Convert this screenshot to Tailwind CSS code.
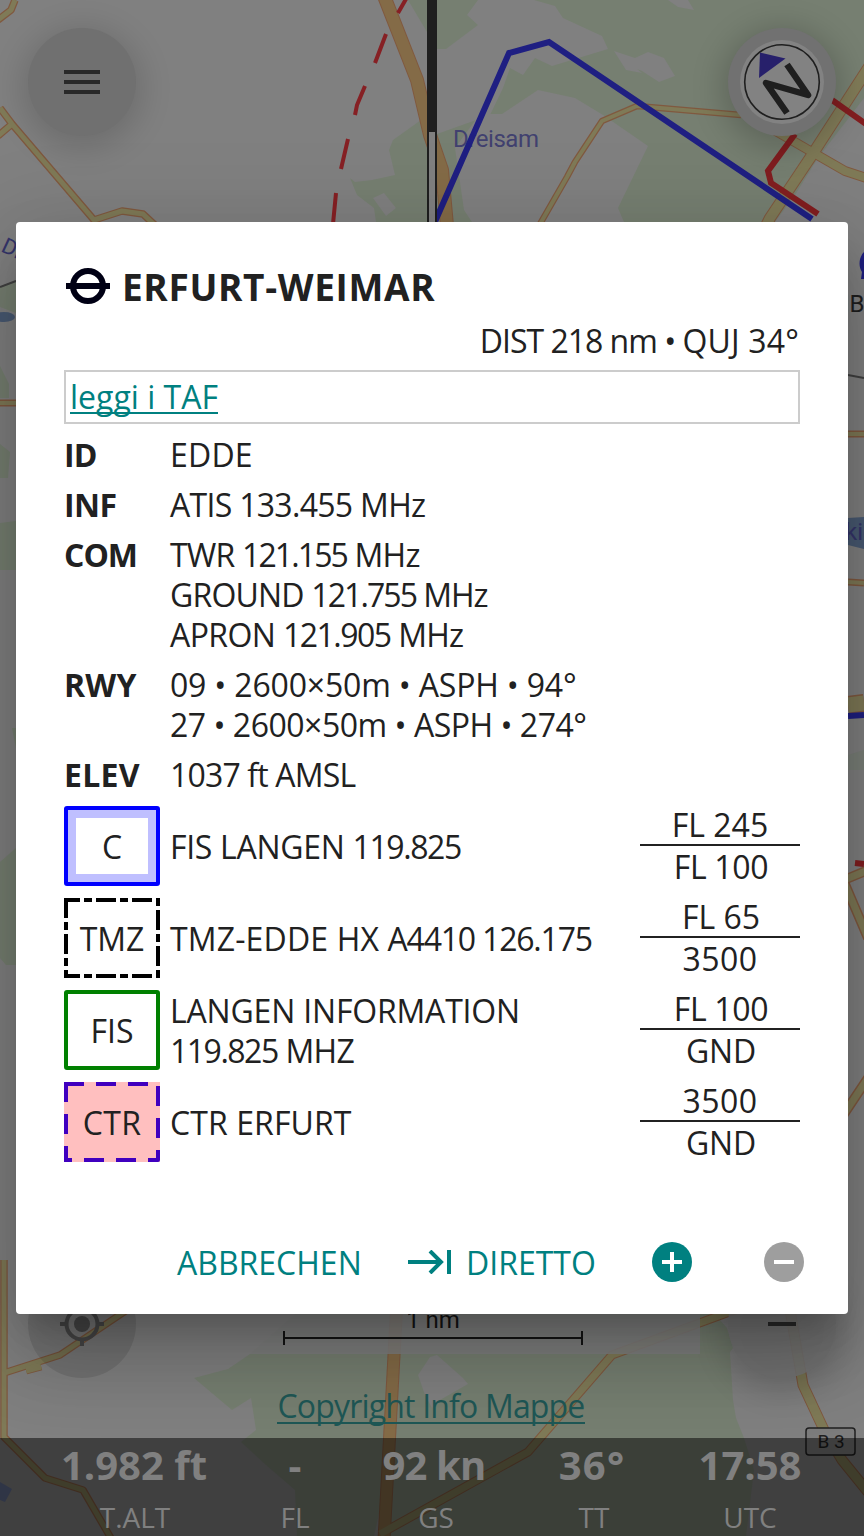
<!DOCTYPE html>
<html lang="it">
<head>
<meta charset="utf-8">
<title>Erfurt-Weimar</title>
<script src="https://cdn.jsdelivr.net/npm/@tailwindcss/browser@4"></script>
</head>
<body class="relative h-[1536px] w-[864px] overflow-hidden bg-[#808080] font-['Open_Sans',sans-serif]">

<!-- Map -->
<svg class="absolute inset-0" width="864" height="1536" viewBox="0 0 864 1536" fill="none">
  <defs>
    <filter id="soft" x="-60%" y="-60%" width="220%" height="220%"><feGaussianBlur stdDeviation="16"/></filter>
  </defs>
  <g fill="#767f71">
    <path d="M408 0H864V222H376L374 208L357 195L350 178L355 182L372 180L395 175L389 150L393 140L421 120L427 118V32Z"/>
    <path d="M0 307L16 313V280L0 287ZM0 366L9 384V398H0ZM0 444L10 452L8 478H0ZM0 523L16 521V570H0ZM0 862L16 848V965L6 965L0 958ZM12 728H16V748Z"/>
    <path d="M848 755L864 750V770H848Z" opacity=".5"/>
    <path d="M194 1378L228 1369L250 1354L300 1310H719L720 1320L727 1328L733 1348L730 1352L733 1400L736 1418L744 1438L754 1470L746 1536H297L295 1490L266 1465L241 1442L256 1430L251 1398L232 1410Z"/>
  </g>
  <g fill="#808080">
    <path d="M373 198L384 193L396 208L386 216Z"/>
    <path d="M437 49L446 49L478 25L467 15L478 0H534L555 6L563 18L602 36L608 49L552 66L535 58L523 75L510 68L503 88L490 115L437 134Z"/>
    <path d="M455 148L480 114H502L538 90L575 98L603 115L648 146L618 208L624 222H472L464 210Z"/>
    <path d="M614 51L635 58L648 52L664 58L675 76L659 82L642 71L637 69L642 73L626 70ZM668 0H688L694 10L678 7Z"/>
    <path d="M864 98L818 158L795 195L775 222H864Z"/>
    <path d="M418 1375L430 1357L437 1355L463 1378L468 1384L440 1400L432 1408L425 1395Z"/>
    <path d="M374 1536L379 1513L384 1536Z"/>
  </g>
  <g fill="#495a73"><ellipse cx="4" cy="317" rx="11" ry="5"/><path d="M848 518L864 517V549L848 545Z"/></g>
  <path d="M0 1482L12 1489L5 1502L0 1500Z" fill="#5f6a8c"/>
  <!-- road casings, then fills -->
  <g stroke="#80593f" stroke-linejoin="round">
    <path stroke-width="14" d="M384 -4L417 80L430 135L442 170L447 226"/>
    <path stroke-width="13" d="M397 1300L384 1540"/>
    <path stroke-width="7.500" d="M15 0L11 10L-2 20M0 108L12 124L94 220L122 211L143 214L158 228M12 124L-2 136"/>
    <path stroke-width="6.500" d="M741 115L637 106L602 121L575 162L567 177L540 224"/>
    <path stroke-width="10" d="M774 130L812 152L845 171L866 178"/>
    <path stroke-width="12" d="M876 56L812 155L770 218L764 230"/>
    <path stroke-width="7.500" d="M4 1260V1437L45 1478L83 1490L112 1540M4 1373L60 1355L130 1308"/>
    <path stroke-width="9" d="M26 1370L41 1366"/>
    <path stroke-width="9" d="M735 1310L612 1355L528 1452L380 1534"/>
    <path stroke-width="11" d="M790 1310L803 1385L824 1430L842 1460L868 1492"/>
    <path stroke-width="7" d="M0 403H16M848 434H864M848 582L864 583"/>
    <path stroke-width="18" d="M848 705L864 703"/>
    <path stroke-width="10" d="M844 880L868 870M844 882L868 938M844 1114L868 1078"/>
  </g>
  <g stroke-linejoin="round" stroke="#7f7a57">
    <path stroke="#846b47" stroke-width="12" d="M384 -4L417 80L430 135L442 170L447 226"/>
    <path stroke="#846b47" stroke-width="11" d="M397 1300L384 1540"/>
    <path stroke-width="5" d="M15 0L11 10L-2 20M0 108L12 124L94 220L122 211L143 214L158 228M12 124L-2 136"/>
    <path stroke-width="4" d="M741 115L637 106L602 121L575 162L567 177L540 224"/>
    <path stroke-width="8" d="M774 130L812 152L845 171L866 178"/>
    <path stroke-width="10" d="M876 56L812 155L770 218L764 230"/>
    <path stroke-width="5" d="M4 1260V1437L45 1478L83 1490L112 1540M4 1373L60 1355L130 1308"/>
    <path stroke-width="7" d="M26 1370L41 1366"/>
    <path stroke-width="7" d="M735 1310L612 1355L528 1452L380 1534"/>
    <path stroke-width="9" d="M790 1310L803 1385L824 1430L842 1460L868 1492"/>
    <path stroke-width="4" d="M0 403H16M848 434H864M848 582L864 583"/>
    <path stroke-width="15" d="M848 705L864 703"/>
    <path stroke-width="7" d="M844 880L868 870M844 882L868 938M844 1114L868 1078"/>
  </g>
  <path d="M0 287L16 281M848 375L864 378" stroke="#404040" stroke-width="2"/>
  <g font-family="Roboto,sans-serif" font-size="24">
    <text x="453" y="147" fill="#41416f" textLength="86">Dreisam</text>
    <text x="0" y="251" fill="#35356b" font-size="22" transform="rotate(25 0 251)">Dr</text>
    <text x="843" y="312" fill="#1f1f1f">IB</text>
    <text x="845" y="540" fill="#35356b">kig</text>
  </g>
  <path d="M864 252C859 257 858 266 862 272L861 279H866V252Z" fill="#1f1f80"/>
  <path d="M406 -1L398 13M386 34L375 63M365 86L357 105L355 115M348 139L341 169M336 193L333 224" stroke="#862024" stroke-width="4"/>
  <path d="M832 100L866 124M795 134L768 171L771 183L818 214M855 863L864 864" stroke="#821e20" stroke-width="6"/>
  <path d="M434 224L509 53L549 42L812 219M848 716L864 715" stroke="#1f1f82" stroke-width="6"/>
  <!-- track-up line -->
  <path d="M427 0H437V228H427Z" fill="#1f1f1f"/>
  <path d="M429 132H435V228H429Z" fill="#808080"/>
  <!-- round map buttons -->
  <g>
    <circle cx="82" cy="88" r="60" fill="#000" opacity=".15" filter="url(#soft)"/>
    <circle cx="82" cy="82" r="54" fill="#707070"/>
    <path d="M64 72H100M64 82H100M64 92H100" stroke="#292929" stroke-width="4"/>
  </g>
  <g>
    <circle cx="782" cy="88" r="60" fill="#000" opacity=".2" filter="url(#soft)"/>
    <circle cx="782" cy="82" r="54" fill="#717171"/>
    <circle cx="782" cy="82" r="42" fill="#828282"/>
    <circle cx="782" cy="82" r="37.3" stroke="#1f1f1f" stroke-width="1.6"/>
    <path d="M760 52.500L785.500 58.500L759 78Z" fill="#27206b"/>
    <path d="M787 64.500L808 95L766 83L787 113" stroke="#1f1f1f" stroke-width="6.500" stroke-linejoin="round"/>
  </g>
  <g>
    <circle cx="82" cy="1324" r="54" fill="#000" opacity=".1"/>
    <g stroke="#464646" stroke-width="4"><circle cx="82" cy="1324" r="15.500"/><path d="M60 1324H68M96 1324H104M82 1338V1346"/></g>
    <circle cx="82" cy="1324" r="8" fill="#464646"/>
  </g>
  <g>
    <circle cx="782" cy="1330" r="60" fill="#000" opacity=".15" filter="url(#soft)"/>
    <circle cx="782" cy="1324" r="54" fill="#727272" opacity=".88"/>
    <path d="M768 1324H796" stroke="#292929" stroke-width="4"/>
  </g>
  <!-- scale -->
  <path d="M164 1300H700V1354H164Z" fill="#808080" opacity=".88"/>
  <path d="M284 1331V1345M582 1331V1345M284 1338H582" stroke="#141414" stroke-width="2"/>
  <text x="433" y="1328" text-anchor="middle" fill="#141414" font-family="Roboto,sans-serif" font-size="24">1 nm</text>
  <g>
    <rect x="806" y="1428" width="49" height="27" rx="3" fill="#7c7c7c" stroke="#1f1f1f" stroke-width="1.500"/>
    <text x="831" y="1448" text-anchor="middle" fill="#1f1f1f" font-family="Roboto,sans-serif" font-size="19">B 3</text>
  </g>
</svg>

<div class="relative flex h-full flex-col justify-end">
  <a class="mb-[12px] pr-[2px] text-center text-[32px] leading-[40px] tracking-[-0.82px] text-[#1f5856]"><span class="border-b-2 border-[#1f5856] inline-block h-[38px] leading-[40px]">Copyright Info Mappe</span></a>
  <footer class="grid h-[98px] grid-cols-[268px_54px_228px_84px_230px] bg-black/50 text-center text-[#808080]">
    <div><div class="h-[58px] text-[40px] font-bold leading-[54px]">1.982 ft</div><div class="pl-[2px] text-[28px] leading-[43px]">T.ALT</div></div>
    <div><div class="h-[58px] text-[40px] font-bold leading-[54px]">-</div><div class="text-[28px] leading-[43px]">FL</div></div>
    <div><div class="h-[58px] whitespace-nowrap pr-[4px] text-[40px] font-bold leading-[54px] tracking-[-0.8px]">92 kn</div><div class="text-[28px] leading-[43px]">GS</div></div>
    <div><div class="h-[58px] text-[40px] font-bold leading-[54px] tracking-[1.2px]">36°</div><div class="pl-1 text-[28px] leading-[43px]">TT</div></div>
    <div><div class="h-[58px] pl-[2px] text-[40px] font-bold leading-[54px]">17:58</div><div class="pl-[2px] text-[28px] leading-[43px]">UTC</div></div>
  </footer>
</div>

<!-- Dialog -->
<main class="absolute left-4 top-[222px] flex h-[1092px] w-[832px] flex-col rounded bg-white px-12 pt-[41px] text-[32px] leading-[40px] text-[#212121] shadow-[0_22px_30px_-14px_rgba(0,0,0,0.2),0_48px_76px_6px_rgba(0,0,0,0.14),0_18px_92px_16px_rgba(0,0,0,0.12)]">
  <h1 class="flex h-[48px] items-center pl-[2px] text-[37px] font-bold leading-[48px] tracking-[0.65px]">
    <svg class="mr-3 -mt-[2px]" width="44" height="40" viewBox="0 0 44 40" fill="none" stroke="#000014" stroke-width="6"><circle cx="22" cy="20" r="15"/><path d="M0 20H44"/></svg>ERFURT-WEIMAR
  </h1>
  <p class="mt-[10px] whitespace-pre pr-px text-right tracking-[-1px]">DIST 218 nm • <span class="tracking-[0.15px]">QUJ 34°</span></p>
  <div class="mt-[9px] h-[54px] border-2 border-[#ccc] px-1 pt-[5px] text-[#008080]"><span class="inline-block h-[37px] border-b-2 border-[#008080] leading-[40px]">leggi i TAF</span></div>

  <dl class="mt-[11px] grid grid-cols-[106px_1fr] gap-y-[10px] whitespace-nowrap">
    <dt class="font-bold tracking-[-0.8px]">ID</dt><dd class="tracking-[0.2px]">EDDE</dd>
    <dt class="font-bold tracking-[-0.5px]">INF</dt><dd class="tracking-[-0.7px]">ATIS 133.455 MHz</dd>
    <dt class="font-bold tracking-[-1px]">COM</dt>
    <dd><div><span class="tracking-[-0.8px]">TWR </span><span class="tracking-[-1.9px]">121.155</span><span class="tracking-[-0.75px]"> MHz</span></div><div><span class="tracking-[-0.8px]">GROUND </span><span class="tracking-[-1.9px]">121.755</span><span class="tracking-[-1.1px]"> MHz</span></div><div><span class="tracking-[-0.6px]">APRON </span><span class="tracking-[-1.5px]">121.905</span><span class="tracking-[-0.75px]"> MHz</span></div></dd>
    <dt class="font-bold tracking-[0.2px]">RWY</dt>
    <dd><div class="tracking-[-0.18px]">09 • 2600×50m • ASPH • 94°</div><div class="tracking-[-0.48px]">27 • 2600×50m • ASPH • 274°</div></dd>
    <dt class="font-bold tracking-[0.3px]">ELEV</dt><dd class="tracking-[-0.83px]">1037 ft AMSL</dd>
  </dl>

  <section class="mt-[11px] flex flex-col gap-3 whitespace-nowrap">
    <div class="flex h-20 items-center">
      <div class="flex h-20 w-24 items-center justify-center rounded-[3px] border-4 border-[#0000ff] bg-white pt-[2px] shadow-[inset_0_0_0_8px_#bfbfff]">C</div>
      <div class="flex-1 pl-[10px] pt-[2px]"><span class="tracking-[-0.3px]">FIS LANGEN </span><span class="tracking-[-1.4px]">119.825</span></div>
      <div class="w-40 text-center"><div class="h-[39px] border-b-2 border-[#212121] leading-[36px]">FL 245</div><div class="h-[39px] leading-[41px] pl-[2px] tracking-[-0.3px]">FL 100</div></div>
    </div>
    <div class="flex h-20 items-center">
      <div class="relative flex h-20 w-24 items-center justify-center pt-[2px]">
        <svg class="absolute inset-0" width="96" height="80" fill="none" stroke="#000" stroke-width="4" stroke-linejoin="round"><path stroke-dasharray="20 4 8 4" stroke-dashoffset="4" d="M0 2H94"/><path stroke-dasharray="8 4 20 4" d="M94 0V80"/><path stroke-dasharray="20 4 8 4" d="M2 0V80"/><path stroke-dasharray="20 4 8 4" stroke-dashoffset="4" d="M0 78H96"/></svg>
        TMZ
      </div>
      <div class="flex-1 pl-[10px] pt-[2px]"><span class="tracking-[0.15px]">TMZ-EDDE HX </span><span class="tracking-[-1.2px]">A4410 126.175</span></div>
      <div class="w-40 text-center"><div class="h-[39px] border-b-2 border-[#212121] leading-[36px] pl-[2px]">FL 65</div><div class="h-[39px] leading-[41px] tracking-[0.4px]">3500</div></div>
    </div>
    <div class="flex h-20 items-center">
      <div class="flex h-20 w-24 items-center justify-center rounded-[3px] border-4 border-[#008000] pt-[2px]">FIS</div>
      <div class="flex-1 pl-[10px] pt-[2px]"><div class="tracking-[-0.18px]">LANGEN INFORMATION</div><div><span class="tracking-[-1.5px]">119.825</span><span class="tracking-[-0.6px]"> MHZ</span></div></div>
      <div class="w-40 text-center"><div class="h-[39px] border-b-2 border-[#212121] leading-[36px] pl-[2px] tracking-[-0.3px]">FL 100</div><div class="h-[39px] leading-[41px] pl-[2px] tracking-[-0.2px]">GND</div></div>
    </div>
    <div class="flex h-20 items-center">
      <div class="relative flex h-20 w-24 items-center justify-center bg-[#ffbfbf] pt-[2px]">
        <svg class="absolute inset-0" width="96" height="80" fill="none" stroke="#4000bf" stroke-width="4" stroke-linejoin="round"><path stroke-dasharray="20 12" d="M0 2H94"/><path stroke-dasharray="20 12" stroke-dashoffset="28" d="M94 0V78H0"/><path stroke-dasharray="20 12" d="M2 0V80"/></svg>
        <span class="relative tracking-[0.4px]">CTR</span>
      </div>
      <div class="flex-1 pl-[10px] pt-[2px] tracking-[0.1px]">CTR ERFURT</div>
      <div class="w-40 text-center"><div class="h-[39px] border-b-2 border-[#212121] leading-[36px] tracking-[0.4px]">3500</div><div class="h-[39px] leading-[41px] pl-[2px] tracking-[-0.2px]">GND</div></div>
    </div>
  </section>

  <div class="-mr-1 mt-[78px] flex h-11 items-center justify-end text-[#008080]">
    <span class="w-[230px] pt-[2px]">ABBRECHEN</span>
    <svg class="mr-[15px] -mt-[1px]" width="44" height="24" viewBox="0 0 44 24" fill="none" stroke="#008080" stroke-width="4"><path d="M1 12H34M23 1L34 12L23 23M42 0V24"/></svg>
    <span class="w-[186px] pt-[2px]">DIRETTO</span>
    <svg width="40" height="40" viewBox="0 0 40 40"><circle cx="20" cy="20" r="20" fill="#008080"/><path d="M10 20H30M20 10V30" stroke="#fff" stroke-width="4"/></svg>
    <svg class="ml-[72px]" width="40" height="40" viewBox="0 0 40 40"><circle cx="20" cy="20" r="20" fill="#9e9e9e"/><path d="M10 20H30" stroke="#fff" stroke-width="4"/></svg>
  </div>
</main>
</body>
</html>
